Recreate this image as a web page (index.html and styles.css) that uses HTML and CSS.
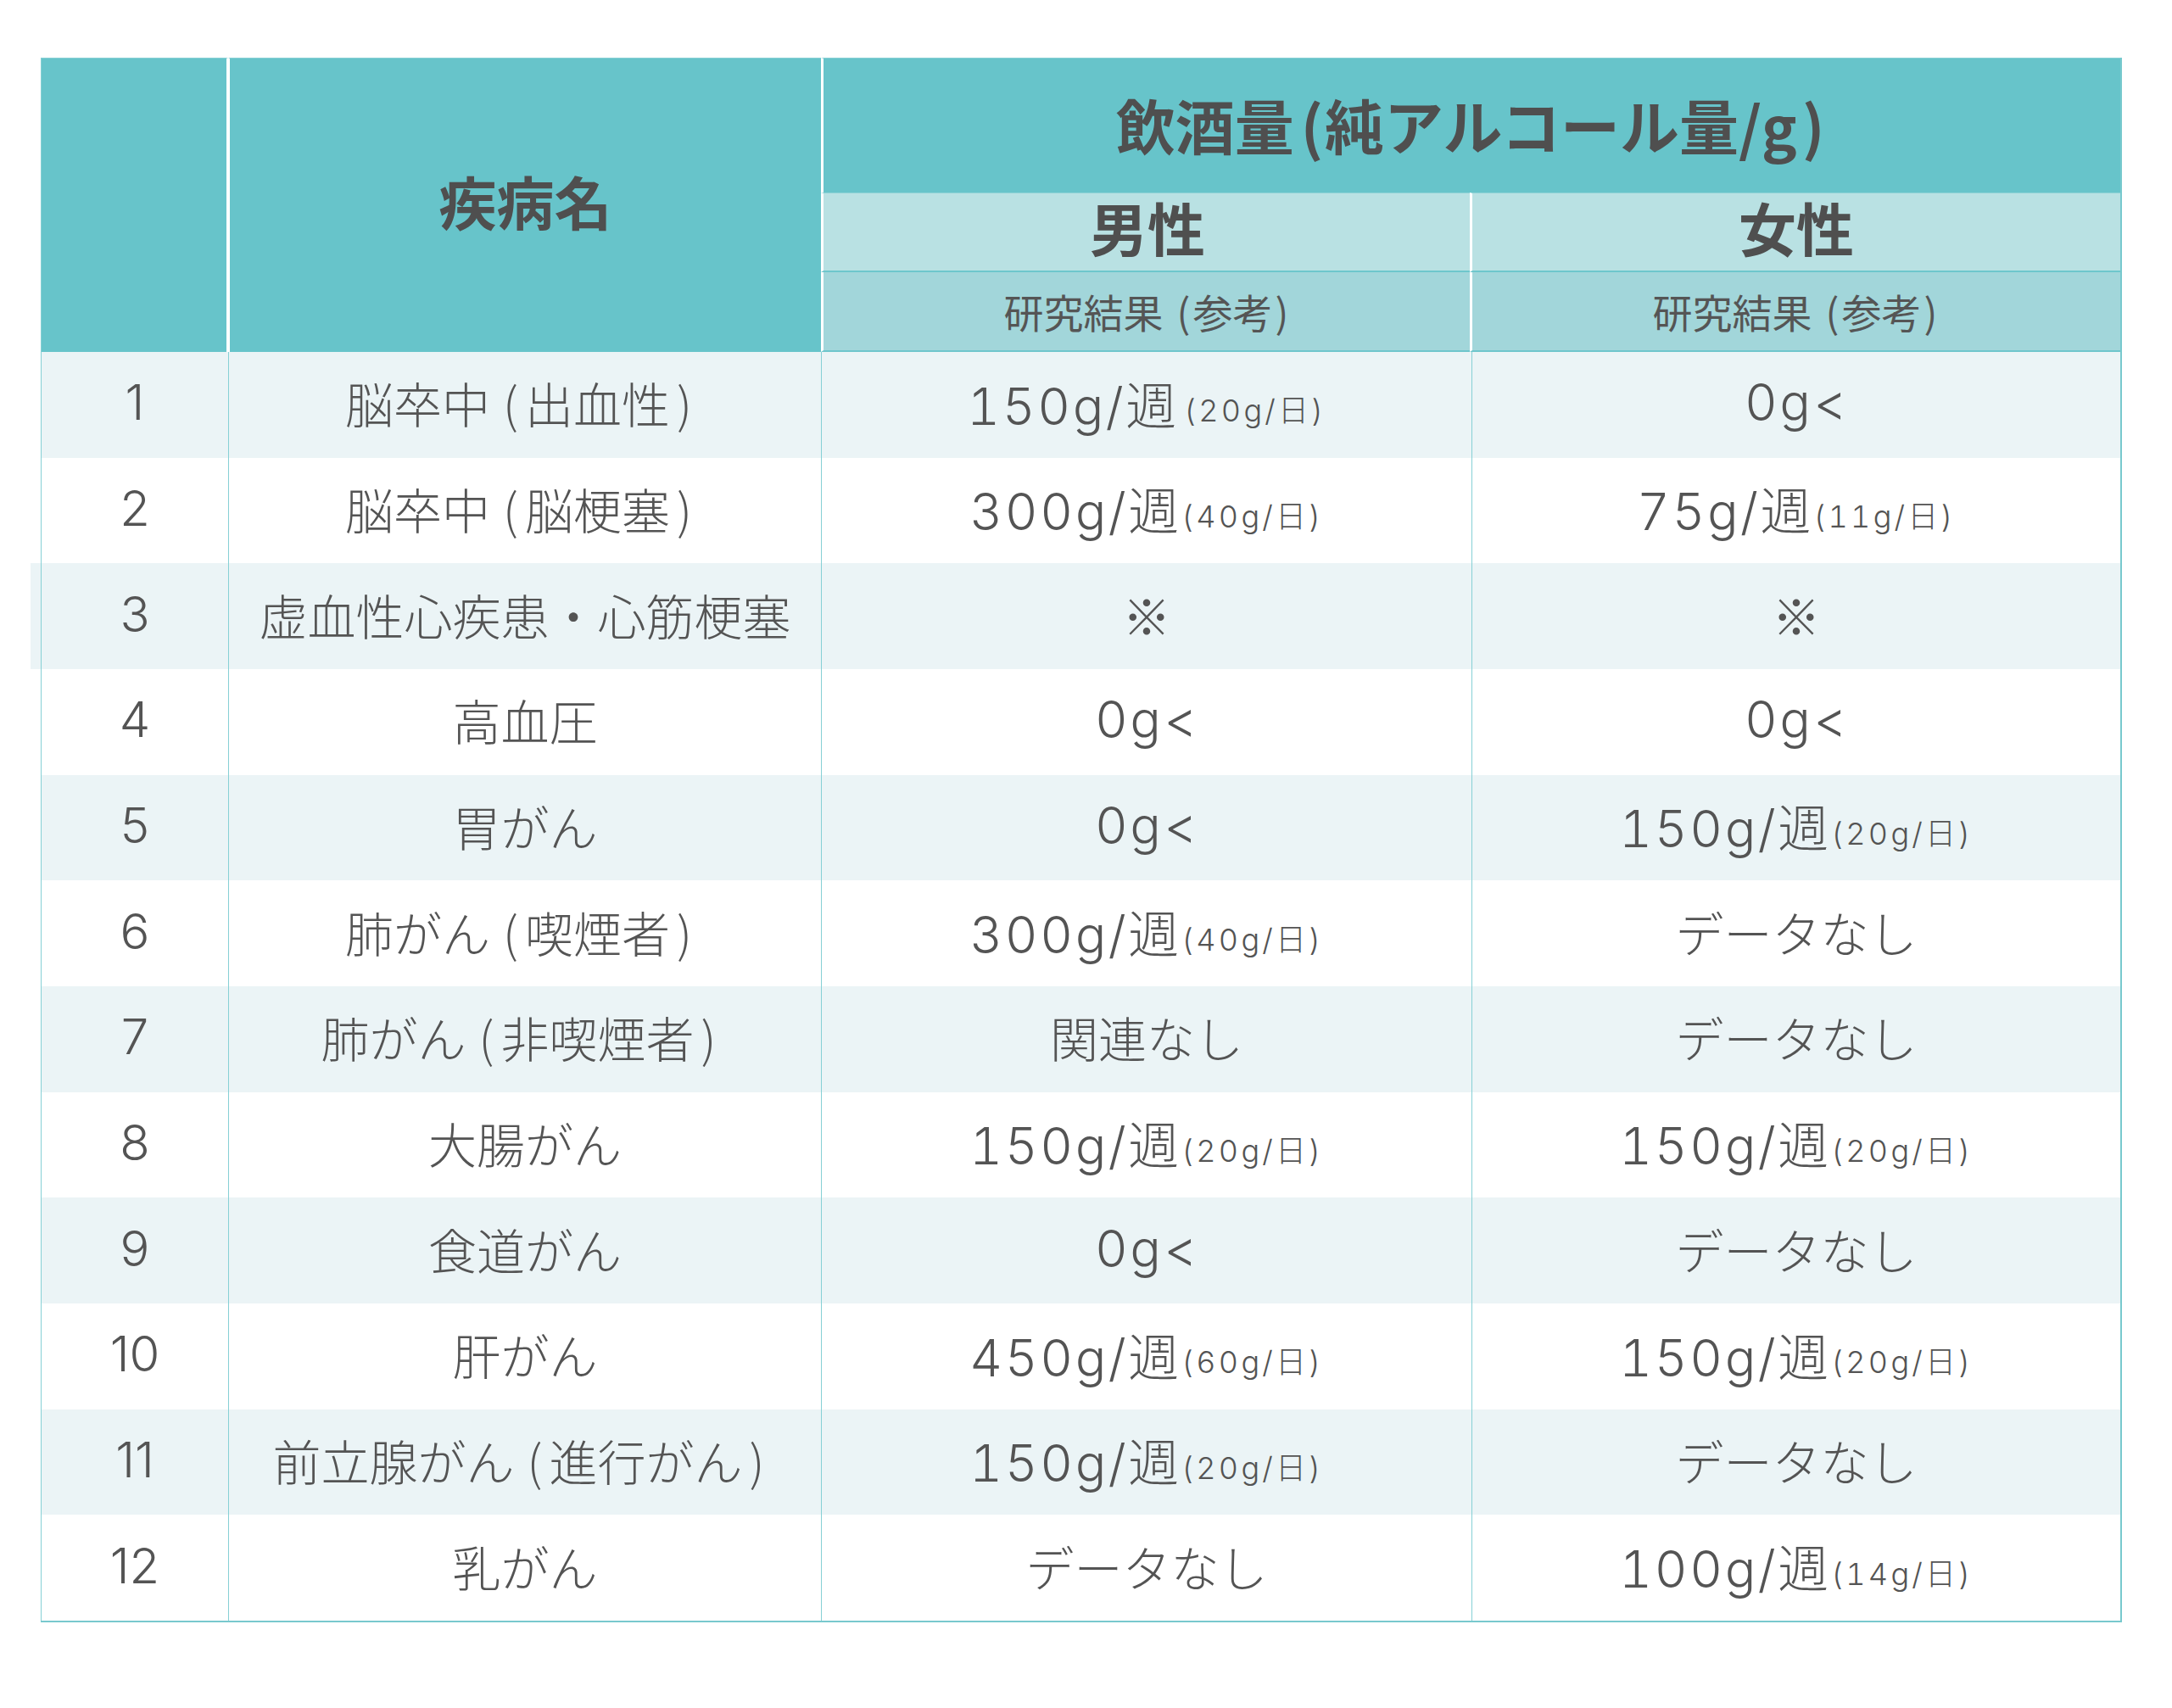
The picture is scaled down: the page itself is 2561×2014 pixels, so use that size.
FILE: index.html
```html
<!DOCTYPE html>
<html lang="ja">
<head>
<meta charset="utf-8">
<title>飲酒量と疾病リスク</title>
<link rel="stylesheet" href="styles.css">
</head>
<body>
<div class="sheet">
  <div class="h-no"></div>
  <div class="h-name">疾病名</div>
  <div class="h-title">飲酒量<span class="po">(</span>純アルコール量/g<span class="pc">)</span></div>
  <div class="h-sex h-male">男性</div>
  <div class="h-sex h-female">女性</div>
  <div class="h-sub h-male">研究結果<span class="sp gap">(</span>参考<span class="sp">)</span></div>
  <div class="h-sub h-female">研究結果<span class="sp gap">(</span>参考<span class="sp">)</span></div>

  <div class="c no odd">1</div><div class="c name odd">脳卒中<span class="po">(</span>出血性<span class="pc">)</span></div><div class="c val odd"><span class="num">150g/週</span><span class="small gap">(20g/日)</span></div><div class="c val odd"><span class="num">0g&lt;</span></div>
  <div class="c no">2</div><div class="c name">脳卒中<span class="po">(</span>脳梗塞<span class="pc">)</span></div><div class="c val"><span class="num">300g/週</span><span class="small">(40g/日)</span></div><div class="c val"><span class="num">75g/週</span><span class="small">(11g/日)</span></div>
  <div class="c no odd ext">3</div><div class="c name odd">虚血性心疾患・心筋梗塞</div><div class="c val odd">※</div><div class="c val odd">※</div>
  <div class="c no">4</div><div class="c name">高血圧</div><div class="c val"><span class="num">0g&lt;</span></div><div class="c val"><span class="num">0g&lt;</span></div>
  <div class="c no odd">5</div><div class="c name odd">胃がん</div><div class="c val odd"><span class="num">0g&lt;</span></div><div class="c val odd"><span class="num">150g/週</span><span class="small">(20g/日)</span></div>
  <div class="c no">6</div><div class="c name">肺がん<span class="po">(</span>喫煙者<span class="pc">)</span></div><div class="c val"><span class="num">300g/週</span><span class="small">(40g/日)</span></div><div class="c val">データなし</div>
  <div class="c no odd">7</div><div class="c name odd">肺がん<span class="po">(</span>非喫煙者<span class="pc">)</span></div><div class="c val odd">関連なし</div><div class="c val odd">データなし</div>
  <div class="c no">8</div><div class="c name">大腸がん</div><div class="c val"><span class="num">150g/週</span><span class="small">(20g/日)</span></div><div class="c val"><span class="num">150g/週</span><span class="small">(20g/日)</span></div>
  <div class="c no odd">9</div><div class="c name odd">食道がん</div><div class="c val odd"><span class="num">0g&lt;</span></div><div class="c val odd">データなし</div>
  <div class="c no">10</div><div class="c name">肝がん</div><div class="c val"><span class="num">450g/週</span><span class="small">(60g/日)</span></div><div class="c val"><span class="num">150g/週</span><span class="small">(20g/日)</span></div>
  <div class="c no odd">11</div><div class="c name odd">前立腺がん<span class="po">(</span>進行がん<span class="pc">)</span></div><div class="c val odd"><span class="num">150g/週</span><span class="small">(20g/日)</span></div><div class="c val odd">データなし</div>
  <div class="c no">12</div><div class="c name">乳がん</div><div class="c val">データなし</div><div class="c val"><span class="num">100g/週</span><span class="small">(14g/日)</span></div>
</div>
</body>
</html>
```

FILE: styles.css
```css
html, body {
  margin: 0;
  padding: 0;
  background: #ffffff;
}

body {
  font-family: "Noto Sans CJK JP", "Noto Sans", sans-serif;
  color: #545454;
}

.sheet {
  display: grid;
  grid-template-columns: 221px 699px 767px 765px;
  grid-template-rows: 159px 94px 94px repeat(12, 124.667px);
  width: 2452px;
  margin: 68px 0 0 48px;
  border-right: 2px solid #78c9ce;
  border-bottom: 2px solid #78c9ce;
}

.h-no, .h-name, .h-title, .h-sex, .h-sub {
  display: flex;
  align-items: center;
  justify-content: center;
  box-sizing: border-box;
  color: #4f4f4f;
  font-weight: 700;
  white-space: nowrap;
}

.h-no {
  grid-column: 1;
  grid-row: 1 / 4;
  background: #67c4ca;
  border-left: 1px solid #86cfd4;
  border-right: 2px solid #ffffff;
  border-top: 1px solid #86cfd4;
}

.h-name {
  grid-column: 2;
  grid-row: 1 / 4;
  background: #67c4ca;
  border-left: 2px solid #ffffff;
  border-top: 1px solid #86cfd4;
  font-size: 68px;
  padding-bottom: 12px;
}

.h-title {
  grid-column: 3 / 5;
  grid-row: 1;
  background: #67c4ca;
  border-left: 3px solid #ffffff;
  border-top: 1px solid #86cfd4;
  font-size: 70px;
  padding-bottom: 4px;
}

.h-title .po {
  margin: 0 2px 0 8px;
}

.h-title .pc {
  margin: 0 4px 0 6px;
}

.h-sex {
  grid-row: 2;
  background: #b9e1e3;
  border-left: 3px solid #ffffff;
  border-top: 1px solid #8fd2d6;
  border-bottom: 2px solid #6ec6cc;
  font-size: 68px;
  padding-bottom: 12px;
}

.h-sub {
  grid-row: 3;
  background: #a2d6da;
  border-left: 3px solid #ffffff;
  border-bottom: 2px solid #6ec6cc;
  font-size: 47px;
  font-weight: 400;
  color: #555555;
  padding-bottom: 2px;
}

.h-sub .sp {
  margin: 0 3px;
}

.h-sub .sp.gap {
  margin-left: 16px;
}

.h-male {
  grid-column: 3;
}

.h-female {
  grid-column: 4;
  margin-left: -2px;
}

.c {
  display: flex;
  align-items: center;
  justify-content: center;
  box-sizing: border-box;
  border-left: 1px solid #86d0d5;
  background: #ffffff;
  font-size: 57px;
  font-weight: 300;
  white-space: nowrap;
  padding-bottom: 6px;
}

.c.odd {
  background: #ebf4f6;
}

.c.ext {
  box-shadow: -12px 0 0 #ebf4f6;
}

.c.no {
  font-family: "Inter", "Noto Sans CJK JP", sans-serif;
  font-size: 58px;
  font-weight: 300;
}

.name .po {
  margin: 0 8px 0 15px;
}

.name .pc {
  margin: 0 15px 0 8px;
}

.num {
  font-family: "Inter", "Noto Sans CJK JP", sans-serif;
  font-size: 60px;
  font-weight: 300;
  font-variant-numeric: tabular-nums;
  letter-spacing: 0.045em;
}

.small {
  font-family: "Inter", "Noto Sans CJK JP", sans-serif;
  font-size: 36px;
  font-weight: 300;
  font-variant-numeric: tabular-nums;
  letter-spacing: 0.09em;
  padding-top: 14px;
}

.small.gap {
  margin-left: 6px;
}
```
